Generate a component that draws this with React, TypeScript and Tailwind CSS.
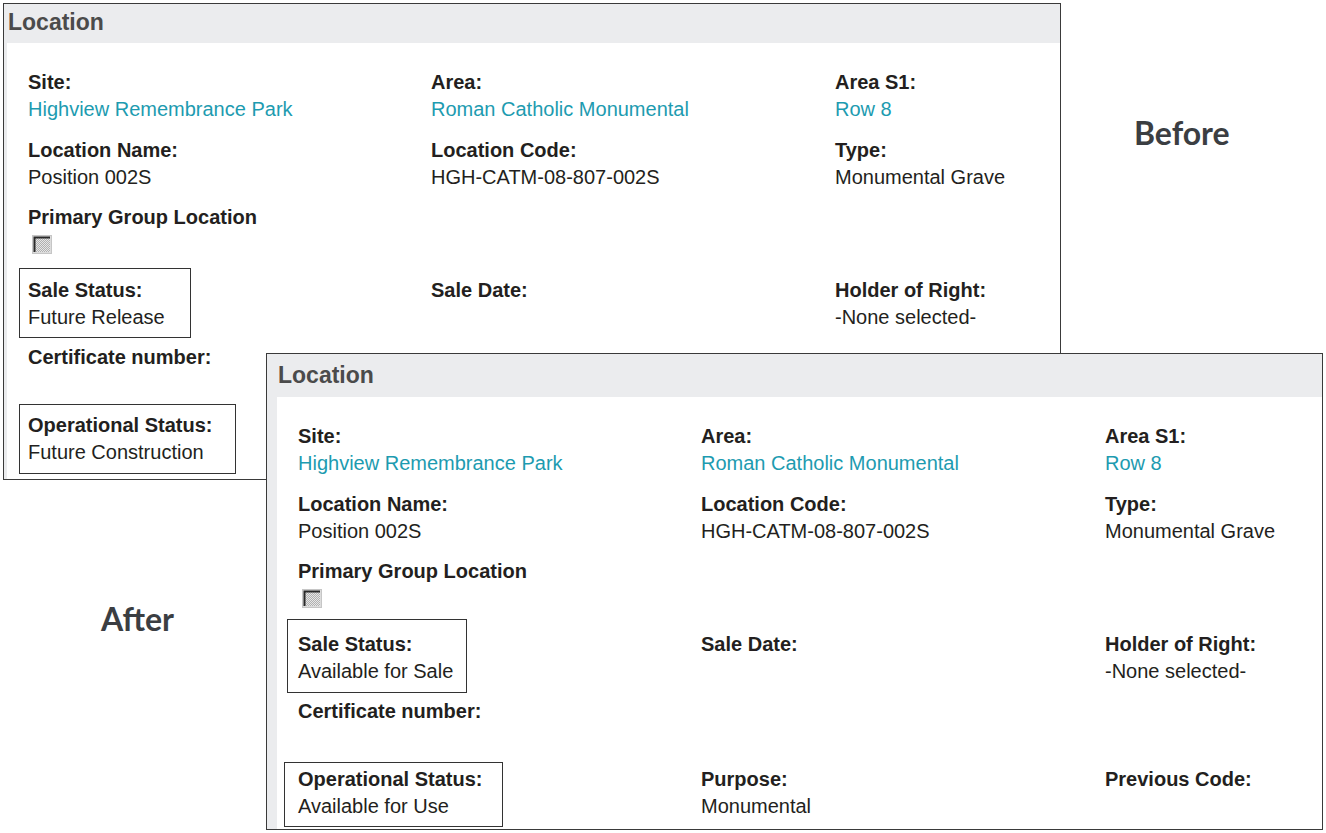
import { ReactNode } from "react";

type FieldProps = {
  label: string;
  value?: string;
  link?: boolean;
  box?: string;
  children?: ReactNode;
};

function Field({ label, value, link, box, children }: FieldProps) {
  return (
    <div className="relative leading-[27px]">
      <div className="font-bold text-[#231f20]">{label}</div>
      {children ?? (
        <div className={link ? "text-[#1d9bb0]" : "text-[#231f20]"}>{value || "\u00a0"}</div>
      )}
      {box && <span className={`absolute border border-[#333] ${box}`} />}
    </div>
  );
}

function Checkbox({ id }: { id: string }) {
  return (
    <svg width="20" height="19" viewBox="0 0 20 19" className="ml-[4px] mt-[4px] block">
      <defs>
        <pattern id={id} width="2" height="2" patternUnits="userSpaceOnUse">
          <rect width="2" height="2" fill="#e6e6e6" />
          <rect width="1" height="1" fill="#b0b0b0" />
          <rect x="1" y="1" width="1" height="1" fill="#b0b0b0" />
        </pattern>
      </defs>
      <rect x="0.5" y="0.5" width="19" height="18" fill="#dcdcdc" stroke="#c6c6c6" />
      <rect x="2" y="2" width="16" height="15" fill={`url(#${id})`} />
      <path d="M2.5 17V2.5H18" stroke="#2a2a2a" strokeWidth="2" fill="none" />
    </svg>
  );
}

type PanelData = {
  id: string;
  saleStatus: string;
  opStatus: string;
  purpose?: string;
  saleBox: string;
  opBox: string;
};

function LocationPanel({
  data,
  className,
  headerClass,
  stripeClass,
}: {
  data: PanelData;
  className: string;
  headerClass: string;
  stripeClass: string;
}) {
  return (
    <div className={`absolute flex flex-col border border-[#3a3a3a] bg-[#ebecee] ${className}`}>
      <div className={`flex items-center text-[23px] font-bold text-[#4b4b4b] ${headerClass}`}>
        Location
      </div>
      <div className={`flex-1 bg-white pl-[21px] pt-[26px] text-[20px] ${stripeClass}`}>
        <div className="grid h-[68px] grid-cols-[403px_404px_1fr]">
          <Field label="Site:" value="Highview Remembrance Park" link />
          <Field label="Area:" value="Roman Catholic Monumental" link />
          <Field label="Area S1:" value="Row 8" link />
        </div>
        <div className="grid h-[67px] grid-cols-[403px_404px_1fr]">
          <Field label="Location Name:" value="Position 002S" />
          <Field label="Location Code:" value="HGH-CATM-08-807-002S" />
          <Field label="Type:" value="Monumental Grave" />
        </div>
        <div className="grid h-[73px] grid-cols-[403px_404px_1fr]">
          <Field label="Primary Group Location">
            <Checkbox id={data.id} />
          </Field>
        </div>
        <div className="grid h-[67px] grid-cols-[403px_404px_1fr]">
          <Field label="Sale Status:" value={data.saleStatus} box={data.saleBox} />
          <Field label="Sale Date:" />
          <Field label="Holder of Right:" value="-None selected-" />
        </div>
        <div className="grid h-[68px] grid-cols-[403px_404px_1fr]">
          <Field label="Certificate number:" />
        </div>
        <div className="grid grid-cols-[403px_404px_1fr]">
          <Field label="Operational Status:" value={data.opStatus} box={data.opBox} />
          {data.purpose && <Field label="Purpose:" value={data.purpose} />}
          {data.purpose && <Field label="Previous Code:" />}
        </div>
      </div>
    </div>
  );
}

// the "before" panel's last row is hidden under the "after" panel
const before: PanelData = {
  id: "chk-before",
  saleStatus: "Future Release",
  opStatus: "Future Construction",
  saleBox: "-left-[9px] -top-[9px] w-[172px] h-[70px]",
  opBox: "-left-[9px] -top-[8px] w-[217px] h-[70px]",
};

const after: PanelData = {
  id: "chk-after",
  saleStatus: "Available for Sale",
  opStatus: "Available for Use",
  purpose: "Monumental",
  saleBox: "-left-[11px] -top-[12px] w-[180px] h-[74px]",
  opBox: "-left-[14px] -top-[4px] w-[219px] h-[65px]",
};

export default function App() {
  return (
    <div className="relative h-[833px] w-[1326px] overflow-hidden bg-white font-['Liberation_Sans',Arial,sans-serif]">
      <LocationPanel
        data={before}
        className="left-[3px] top-[3px] h-[477px] w-[1058px]"
        headerClass="h-[39px] pl-[4px] pb-[2px]"
        stripeClass="ml-[3px]"
      />
      <div className="absolute left-[1134px] top-[113px] font-['Lato',sans-serif] text-[32px] font-bold leading-[40px] text-[#3b3e42]">
        Before
      </div>
      <div className="absolute left-[101px] top-[599px] font-['Lato',sans-serif] text-[32px] font-bold leading-[40px] text-[#3b3e42]">
        After
      </div>
      <LocationPanel
        data={after}
        className="left-[266px] top-[353px] h-[477px] w-[1057px]"
        headerClass="h-[43px] pl-[11px]"
        stripeClass="ml-[10px]"
      />
    </div>
  );
}
